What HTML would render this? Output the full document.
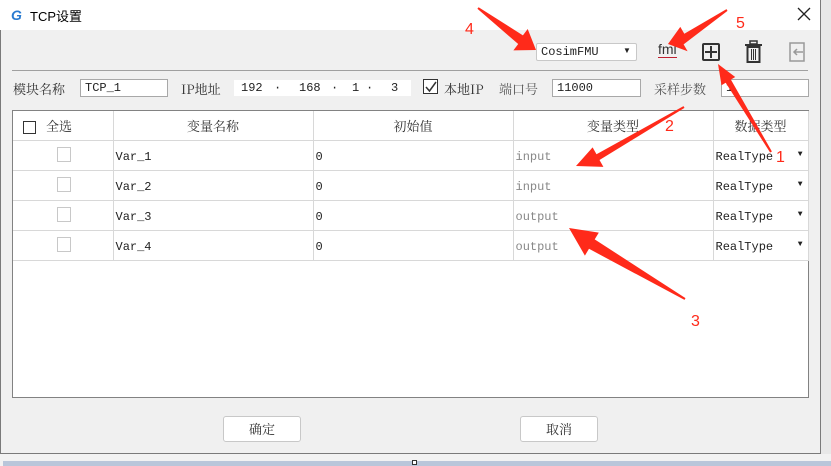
<!DOCTYPE html>
<html><head><meta charset="utf-8"><style>
*{margin:0;padding:0;box-sizing:border-box}
body{width:831px;height:466px;overflow:hidden;background:#fff;position:relative;font-family:"Liberation Sans","Noto Sans CJK SC",sans-serif;font-size:13px;color:#222}
.a{position:absolute}
.win{left:0;top:0;width:821px;height:454px;background:#f0f0f0;border:1px solid #7a7a7a;border-top:none}
.title{left:0;top:0;width:820px;height:30px;background:#fff}
.inp{background:#fff;border:1px solid #a8a8a8;height:18px;font-family:"Liberation Mono",monospace;font-size:12px;padding-left:4px;line-height:16px}
.lbl{font-family:"Noto Serif CJK SC","Noto Sans CJK SC",serif;font-size:13px;color:#333}
table{border-collapse:collapse;position:absolute;left:13px;top:111px;background:#fff}
td{border:1px solid #d8d8d8;height:30px;font-family:"Liberation Mono",monospace;font-size:12px;padding-left:2px;padding-top:3px}
th{border:1px solid #d8d8d8;border-top:none;height:29px;font-weight:normal;font-family:"Noto Serif CJK SC",serif;font-size:13px;color:#333}
tr td:first-child,tr th:first-child{border-left:none}
.cb{display:inline-block;width:14px;height:15px;border:1px solid #c8c8c8;background:#fff}
.g{color:#888}
.btn{top:416px;width:78px;height:26px;background:#fff;border:1px solid #c8c8c8;border-radius:3px;text-align:center;line-height:24px;font-family:"Noto Serif CJK SC",serif;font-size:13px;color:#333}
</style></head><body>
<div class="a" style="left:821px;top:0;width:10px;height:466px;background:#e8e8e8"></div>
<div class="a" style="left:0;top:454px;width:831px;height:12px;background:#f2f2f2"></div>
<div class="a" style="left:3px;top:461px;width:828px;height:5px;background:#b9c6da"></div>
<div class="a" style="left:412px;top:460px;width:5px;height:5px;border:1px solid #333;background:#fff"></div>
<div class="a win"></div>
<div class="a title"></div>
<div class="a" style="left:11px;top:7px;font-weight:bold;font-style:italic;color:#2a7bd0;font-size:14px">G</div>
<div class="a" style="left:30px;top:6px;font-size:13px;color:#000">TCP设置</div>
<svg class="a" style="left:797px;top:7px" width="14" height="14"><path d="M1 1L13 13M13 1L1 13" stroke="#222" stroke-width="1.3"/></svg>
<div class="a inp" style="left:536px;top:43px;width:101px;height:18px;border-color:#c8c8c8;border-radius:2px">CosimFMU</div>
<div class="a" style="left:623px;top:46px;font-size:8px">▼</div>
<div class="a" style="left:658px;top:41px;font-size:14px;color:#333;border-bottom:1px solid #c02030;line-height:16px">fmi</div>
<div class="a" style="left:702px;top:43px;width:18px;height:18px;border:2px solid #333;border-radius:2px"></div>
<div class="a" style="left:705px;top:51px;width:12px;height:2px;background:#333"></div>
<div class="a" style="left:710px;top:46px;width:2px;height:12px;background:#333"></div>
<svg class="a" style="left:744px;top:40px" width="20" height="24"><rect x="1" y="4" width="17" height="2" fill="#333"/><rect x="6" y="1" width="7" height="3" fill="none" stroke="#333" stroke-width="1.5"/><rect x="3.5" y="7" width="12" height="15" fill="none" stroke="#333" stroke-width="2"/><path d="M7.5 9v11M9.5 9v11M11.5 9v11" stroke="#333"/></svg>
<svg class="a" style="left:788px;top:42px" width="18" height="20"><path d="M10 1H2v18h8M10 1h6v18h-6" fill="none" stroke="#999" stroke-width="1.5"/><path d="M15 10H7M9 7l-3 3 3 3" fill="none" stroke="#999" stroke-width="1.5"/></svg>
<div class="a" style="left:12px;top:70px;width:796px;height:1px;background:#a0a0a0"></div>
<div class="a lbl" style="left:13px;top:79px">模块名称</div>
<div class="a inp" style="left:80px;top:79px;width:88px">TCP_1</div>
<div class="a lbl" style="left:181px;top:79px">IP地址</div>
<div class="a" style="left:234px;top:80px;width:177px;height:16px;background:#fff;font-family:'Liberation Mono',monospace;font-size:12px;line-height:16px"><span class="a" style="left:7px">192</span><span class="a" style="left:40px">·</span><span class="a" style="left:65px">168</span><span class="a" style="left:97px">·</span><span class="a" style="left:118px">1</span><span class="a" style="left:132px">·</span><span class="a" style="left:157px">3</span></div>
<div class="a" style="left:423px;top:79px;width:15px;height:15px;border:1px solid #333;background:#fff"></div>
<svg class="a" style="left:424px;top:80px" width="14" height="14"><path d="M2 7l3.5 4L12 2" fill="none" stroke="#333" stroke-width="1.5"/></svg>
<div class="a lbl" style="left:444px;top:79px">本地IP</div>
<div class="a lbl" style="left:499px;top:79px;color:#555">端口号</div>
<div class="a inp" style="left:552px;top:79px;width:89px">11000</div>
<div class="a lbl" style="left:654px;top:79px;color:#555">采样步数</div>
<div class="a inp" style="left:721px;top:79px;width:88px">1</div>
<div class="a" style="left:12px;top:110px;width:797px;height:288px;background:#fff;border:1px solid #828282"></div>
<table>
<tr><th style="width:100px;text-align:left;padding-left:10px"><span class="cb" style="border-color:#333;vertical-align:-3px;width:13px;height:13px"></span>&nbsp;&nbsp;&nbsp;全选</th><th style="width:200px">变量名称</th><th style="width:200px">初始值</th><th style="width:200px">变量类型</th><th style="width:95px">数据类型</th></tr>
<tr><td style="text-align:center"><span class="cb"></span></td><td>Var_1</td><td>0</td><td class="g">input</td><td>RealType <span style="float:right;font-size:8px;margin-right:5px">▼</span></td></tr>
<tr><td style="text-align:center"><span class="cb"></span></td><td>Var_2</td><td>0</td><td class="g">input</td><td>RealType <span style="float:right;font-size:8px;margin-right:5px">▼</span></td></tr>
<tr><td style="text-align:center"><span class="cb"></span></td><td>Var_3</td><td>0</td><td class="g">output</td><td>RealType <span style="float:right;font-size:8px;margin-right:5px">▼</span></td></tr>
<tr><td style="text-align:center"><span class="cb"></span></td><td>Var_4</td><td>0</td><td class="g">output</td><td>RealType <span style="float:right;font-size:8px;margin-right:5px">▼</span></td></tr>
</table>
<div class="a btn" style="left:223px">确定</div>
<div class="a btn" style="left:520px">取消</div>
<svg class="a" style="left:0;top:0" width="831" height="466">
<g fill="#ff2a1a">
<polygon points="478.6,7.2 477.4,8.8 518.2,44.0 513.4,50.4 536,50 527.7,29.0 522.9,35.4"/>
<polygon points="726.5,9.1 727.5,10.9 683.6,44.4 687.6,51.3 668,44 680.3,26.9 684.3,33.8"/>
<polygon points="771.9,151.5 730.9,79.6 735.2,77.0 718,64 721.5,85.2 725.7,82.7 770.1,152.5"/>
<polygon points="683.5,106.1 684.5,107.9 599.5,160.0 603.4,166.9 576,166 592.6,147.4 596.5,154.3"/>
<polygon points="685.5,298.1 684.5,299.9 589.0,248.8 584.9,255.6 569,228 598.8,232.6 594.7,239.4"/>
</g>
<g fill="#ff2a1a" font-family="Liberation Sans,sans-serif" font-size="16">
<text x="465" y="34">4</text><text x="736" y="28">5</text><text x="776" y="162">1</text><text x="665" y="131">2</text><text x="691" y="326">3</text>
</g>
</svg>
</body></html>
